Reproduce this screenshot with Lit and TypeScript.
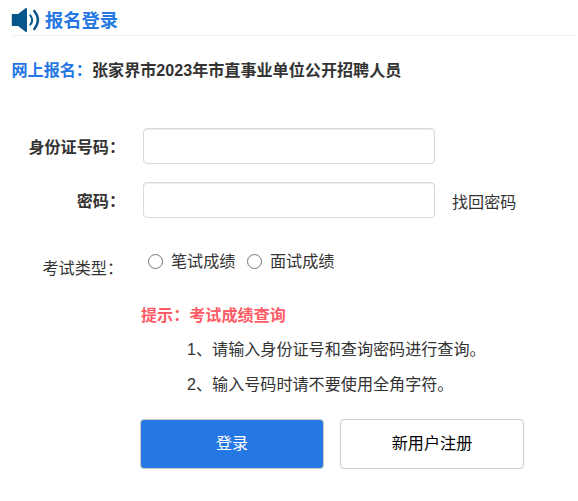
import { LitElement, html, css } from "lit";

class AppRoot extends LitElement {
  static styles = css`
    :host { display: block; height: 501px; background: #fff; overflow: hidden; color: #333; font: 16.1px/24px "Liberation Sans", "Noto Sans CJK SC", sans-serif; }
    * { box-sizing: border-box; }
    .head { display: flex; align-items: center; height: 36px; margin: 0 1px 0 11px; border-bottom: 1px solid #f2f2f2; padding-top: 7px; }
    .icon { width: 30px; height: 26px; margin: -3px 4px 0 0; }
    h1 { margin: 0; font-size: 18.3px; line-height: 26px; color: #2577e3; }
    .sub { margin: 22px 0 0 11.5px; font-weight: bold; }
    .sub span { color: #2577e3; }
    .row { display: flex; align-items: center; height: 36px; }
    .label { width: 125px; text-align: right; margin-right: 18px; padding-top: 1px; font-weight: bold; }
    .light { font-weight: normal; padding-top: 13px; width: 123px; margin-right: 25px; }
    .input { width: 292px; height: 36px; border: 1px solid #d9d9d9; border-radius: 4px; font: inherit; padding: 0 10px; box-shadow: inset 0 1px 1px rgba(0,0,0,.075); }
    .first { margin-top: 46px; }
    .second { margin-top: 18px; }
    .find { margin: 4px 0 0 17px; }
    .third { margin-top: 25px; }
    .radio { width: 15px; height: 15px; border: 1px solid #767676; border-radius: 50%; margin-right: 8px; }
    .radio.next { margin-left: 11.6px; }
    .hint { margin: 24px 0 0 141px; color: #ff5c66; font-weight: bold; }
    .tip { margin: 10px 0 0 187px; }
    .tip + .tip { margin-top: 11px; }
    .buttons { display: flex; gap: 16px; margin: 23px 0 0 140px; }
    button { width: 184px; height: 50px; font: inherit; border-radius: 4px; border: 1px solid #ccc; background: #fff; color: #000; padding: 0 0 2px; }
    .primary { background: #2577e3; color: #fff; }
  `;
  render() {
    return html`
      <div class="head">
        <svg class="icon" viewBox="0 0 30 26" fill="none" stroke="#07568b" stroke-linecap="round">
          <path d="M1.5 7H7L14.5 1.2Q16 .4 16 2V24Q16 25.6 14.5 24.8L7 19H1.5Q.8 19 .8 18V8Q.8 7 1.5 7z" fill="#07568b" stroke="none"/>
          <path d="M19.3 8.3q3.8 4.7 0 9.4" stroke-width="2"/>
          <path d="M23.3 4q7.2 9 0 18" stroke-width="2.4"/>
        </svg>
        <h1>报名登录</h1>
      </div>
      <div class="sub"><span>网上报名：</span>张家界市2023年市直事业单位公开招聘人员</div>
      <div class="row first"><div class="label">身份证号码：</div><input class="input"></div>
      <div class="row second"><div class="label">密码：</div><input class="input"><div class="find">找回密码</div></div>
      <div class="row third"><div class="label light">考试类型：</div><i class="radio"></i>笔试成绩<i class="radio next"></i>面试成绩</div>
      <div class="hint">提示：考试成绩查询</div>
      <div class="tip">1、请输入身份证号和查询密码进行查询。</div>
      <div class="tip">2、输入号码时请不要使用全角字符。</div>
      <div class="buttons"><button class="primary">登录</button><button>新用户注册</button></div>
    `;
  }
}
customElements.define("app-root", AppRoot);
